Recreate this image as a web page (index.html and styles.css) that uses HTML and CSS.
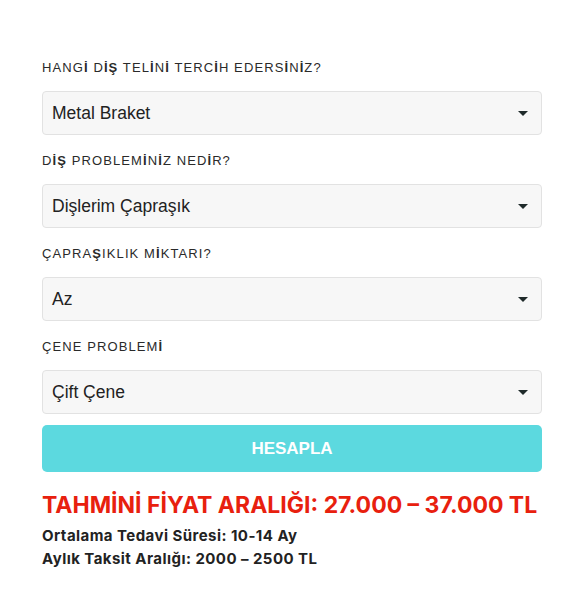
FILE: index.html
```html
<!DOCTYPE html>
<html lang="tr">
<head>
<meta charset="utf-8">
<title>Fiyat Hesaplama</title>
<link rel="stylesheet" href="styles.css">
</head>
<body>
<div class="calc">
  <div class="group">
    <label class="lbl">HANG<b>İ</b> D<b>İŞ</b> TEL<b>İ</b>N<b>İ</b> TERC<b>İ</b>H EDERS<b>İ</b>N<b>İ</b>Z?</label>
    <div class="select"><span>Metal Braket</span><span class="caret"></span></div>
  </div>
  <div class="group">
    <label class="lbl">D<b>İŞ</b> PROBLEM<b>İ</b>N<b>İ</b>Z NED<b>İ</b>R?</label>
    <div class="select"><span>Dişlerim Çapraşık</span><span class="caret"></span></div>
  </div>
  <div class="group">
    <label class="lbl">ÇAPRA<b>Ş</b>IKLIK M<b>İ</b>KTARI?</label>
    <div class="select"><span>Az</span><span class="caret"></span></div>
  </div>
  <div class="group group-last">
    <label class="lbl">ÇENE PROBLEM<b>İ</b></label>
    <div class="select"><span>Çift Çene</span><span class="caret"></span></div>
  </div>
  <button class="btn">HESAPLA</button>
  <div class="result">
    <h2 class="price">TAHMİNİ FİYAT ARALIĞI: 27.000 – 37.000 TL</h2>
    <p class="info">Ortalama Tedavi Süresi: 10-14 Ay</p>
    <p class="info">Aylık Taksit Aralığı: 2000 – 2500 TL</p>
  </div>
</div>
</body>
</html>
```
FILE: styles.css
```css
html, body {
  margin: 0;
  padding: 0;
  background: #ffffff;
}
body {
  font-family: "Liberation Sans", Arial, sans-serif;
  color: #222;
}
.calc {
  width: 500px;
  margin-left: 42px;
  padding-top: 58px;
  display: flex;
  flex-direction: column;
}
.group {
  display: flex;
  flex-direction: column;
  margin-bottom: 16px;
}
.group-last {
  margin-bottom: 11px;
}
.lbl {
  font-size: 13px;
  line-height: 20px;
  letter-spacing: 1.1px;
  color: #2a2a2a;
  margin-bottom: 13px;
}
.lbl b {
  font-weight: 700;
}
.select {
  height: 44px;
  box-sizing: border-box;
  border: 1px solid #e2e2e2;
  border-radius: 4px;
  background: #f7f7f7;
  display: flex;
  align-items: center;
  justify-content: space-between;
  padding: 1px 13px 0 9px;
  font-size: 17.5px;
  color: #222;
}
.caret {
  width: 0;
  height: 0;
  border-left: 5px solid transparent;
  border-right: 5px solid transparent;
  border-top: 5px solid #1f2a2a;
}
.btn {
  height: 47px;
  border: none;
  border-radius: 5px;
  background: #5cd9df;
  color: #ffffff;
  font-family: "Liberation Sans", Arial, sans-serif;
  font-weight: 700;
  font-size: 17px;
  padding: 0;
}
.result {
  padding-top: 19px;
}
.price {
  margin: 0 0 5px 0;
  font-family: Inter, "Liberation Sans", sans-serif;
  font-size: 23px;
  font-weight: 700;
  line-height: 28px;
  color: #e8200e;
  letter-spacing: 0;
  white-space: nowrap;
}
.info {
  margin: 0;
  font-family: Inter, "Liberation Sans", sans-serif;
  font-size: 15px;
  font-weight: 700;
  line-height: 23px;
  letter-spacing: 0.45px;
  color: #222;
}
```
